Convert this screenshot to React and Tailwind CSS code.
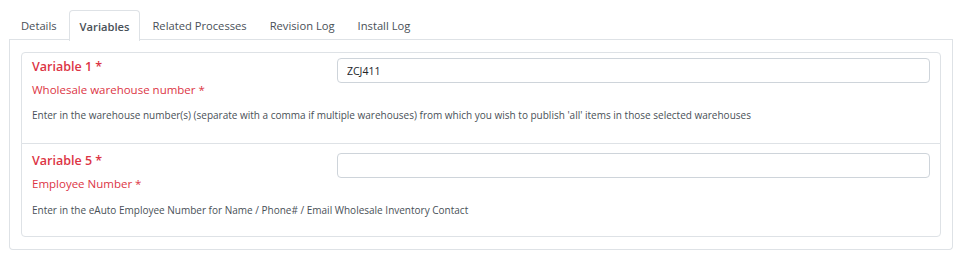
import { useState } from "react";

const tabs = ["Details", "Variables", "Related Processes", "Revision Log", "Install Log"];

const variables = [
  {
    title: "Variable 1 *",
    label: "Wholesale warehouse number *",
    value: "ZCJ411",
    help: "Enter in the warehouse number(s) (separate with a comma if multiple warehouses) from which you wish to publish 'all' items in those selected warehouses",
  },
  {
    title: "Variable 5 *",
    label: "Employee Number *",
    value: "",
    help: "Enter in the eAuto Employee Number for Name / Phone# / Email Wholesale Inventory Contact",
  },
];

const VariableRow = ({ item, first }) => {
  const [value, setValue] = useState(item.value);
  return (
    <div
      className={`px-[10px] border border-[#dee2e6] ${
        first ? "h-[92px] pt-[4px] rounded-t-[4px]" : "-mt-px h-[94px] pt-[7px] rounded-b-[4px]"
      }`}
    >
      <div className="flex items-start">
        <div className="w-[305px] flex flex-col gap-[3px]">
          <div className="text-[12.5px] leading-[20px] font-semibold text-[#dc3545]">
            {item.title}
          </div>
          <div className="text-[11.5px] leading-[20px] text-[#dc3545]">{item.label}</div>
        </div>
        <input
          value={value}
          onChange={(e) => setValue(e.target.value)}
          className={`flex-1 h-[25px] px-[9px] text-[10.5px] text-[#212529] border border-[#ced4da] rounded-[4px] outline-none ${
            first ? "mt-[1px]" : "mt-[2px]"
          }`}
        />
      </div>
      <div className={`${first ? "mt-[7px]" : "mt-[8px]"} text-[10px] leading-[16px] text-[#495057]`}>
        {item.help}
      </div>
    </div>
  );
};

const App = () => {
  const [active, setActive] = useState("Variables");

  return (
    <div className="w-[974px] h-[269px] bg-white pt-[9px] pl-[9px] pr-[21px] font-['Open_Sans',sans-serif]">
      {/* Tabs */}
      <div className="flex h-[31px] border-b border-[#dee2e6] pl-[1px] gap-[1px]">
        {tabs.map((tab) => (
          <button
            key={tab}
            onClick={() => setActive(tab)}
            className={`px-[10px] h-[31px] pt-[3px] text-[11.2px] rounded-t-[4px] ${
              active === tab
                ? "font-semibold text-[#495057] bg-white border border-b-0 border-[#dee2e6] relative top-px"
                : "text-[#495057] border border-transparent"
            }`}
          >
            {tab}
          </button>
        ))}
      </div>
      {/* Panel */}
      <div className="border border-t-0 border-[#dee2e6] rounded-b-[4px] px-[11px] pt-[12px] pb-[12px]">
        {variables.map((item, i) => (
          <VariableRow key={item.title} item={item} first={i === 0} />
        ))}
      </div>
    </div>
  );
};

export default App;
